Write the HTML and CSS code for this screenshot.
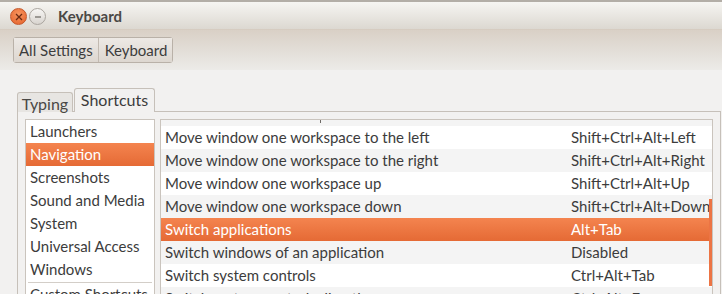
FILE: index.html
```html
<!DOCTYPE html>
<html lang="en">
<head>
    <meta charset="UTF-8">
    <title>Keyboard</title>
    <link rel="stylesheet" href="styles.css">
</head>
<body>

    <!-- Window title bar -->
    <div class="titlebar">
        <span class="wbtn close">
            <svg width="8" height="8" viewBox="0 0 8 8"><path d="M1 1L7 7M7 1L1 7" stroke="#6b2a12" stroke-width="1.3"/></svg>
        </span>
        <span class="wbtn min">
            <svg width="8" height="8" viewBox="0 0 8 8"><path d="M1 4H7" stroke="#6a6661" stroke-width="1.2"/></svg>
        </span>
        <span class="title">Keyboard</span>
    </div>

    <!-- Breadcrumb toolbar -->
    <div class="toolbar">
        <div class="crumbs">
            <button type="button">All Settings</button>
            <button type="button">Keyboard</button>
        </div>
    </div>

    <!-- Notebook tabs -->
    <div class="tabs">
        <span class="tab">Typing</span>
        <span class="tab active">Shortcuts</span>
    </div>

    <div class="panel">
        <ul class="cats">
            <li>Launchers</li>
            <li class="selected">Navigation</li>
            <li>Screenshots</li>
            <li>Sound and Media</li>
            <li>System</li>
            <li>Universal Access</li>
            <li>Windows</li>
            <li class="sep">Custom Shortcuts</li>
        </ul>

        <div class="keys">
            <div class="row partial"><span class="mark"></span></div>
            <div class="row"><span>Move window one workspace to the left</span><span>Shift+Ctrl+Alt+Left</span></div>
            <div class="row odd"><span>Move window one workspace to the right</span><span>Shift+Ctrl+Alt+Right</span></div>
            <div class="row"><span>Move window one workspace up</span><span>Shift+Ctrl+Alt+Up</span></div>
            <div class="row odd"><span>Move window one workspace down</span><span>Shift+Ctrl+Alt+Down</span></div>
            <div class="row selected"><span>Switch applications</span><span>Alt+Tab</span></div>
            <div class="row odd"><span>Switch windows of an application</span><span>Disabled</span></div>
            <div class="row"><span>Switch system controls</span><span>Ctrl+Alt+Tab</span></div>
            <div class="row odd"><span>Switch system controls directly</span><span>Ctrl+Alt+Esc</span></div>
            <div class="thumb"></div>
        </div>
    </div>

</body>
</html>
```

FILE: styles.css
```css
/* General page styling */
body {
    margin: 0;
    background-color: #f2f1f0;
    color: #3c3c3c;
    font-family: Lato, "Open Sans", sans-serif;
    font-size: 15px;
    overflow: hidden;
    height: 294px;
}

/* Title bar */
.titlebar {
    height: 27px;
    border-top: 2px solid #b3aea7;
    border-bottom: 1px solid #d6ccc1;
    background: linear-gradient(#f6f5f2, #dcd8d1);
    display: flex;
    align-items: center;
    padding-left: 10px;
}

.wbtn {
    width: 15px;
    height: 15px;
    border-radius: 50%;
    display: flex;
    align-items: center;
    justify-content: center;
    margin-top: 2px;
}

.close {
    background: radial-gradient(circle at 50% 35%, #f7955f, #e4612a);
    border: 1px solid #c4582c;
}

.min {
    margin-left: 2px;
    background: linear-gradient(#f7f6f4, #d8d4cf);
    border: 1px solid #aaa59f;
}

.title {
    margin-left: 12px;
    font-weight: bold;
    font-size: 15px;
    color: #4a4845;
    margin-top: 1px;
}

/* Toolbar */
.toolbar {
    height: 33px;
    padding: 7px 0 0 13px;
    background: linear-gradient(#d9d0c6, #ecebe8);
}

.crumbs {
    display: inline-flex;
    border: 1px solid #b9b1a8;
    border-radius: 3px;
    height: 24px;
}

.crumbs button {
    font-family: inherit;
    font-size: 15px;
    color: #3c3c3c;
    background: linear-gradient(#ede9e5, #ddd7d0);
    border: none;
    padding: 0 5px;
    margin: 0;
    height: 24px;
    white-space: nowrap;
}

.crumbs button + button {
    border-left: 1px solid #c2bab1;
    padding: 0 5px 0 6px;
}

/* Tabs */
.tabs {
    display: flex;
    align-items: flex-end;
    margin: 19px 0 0 17px;
    gap: 1px;
    height: 23px;
    position: relative;
    z-index: 1;
}

.tab {
    height: 19px;
    width: 54px;
    border: 1px solid #c6c0b9;
    border-bottom: none;
    border-radius: 3px 3px 0 0;
    background: #e7e5e2;
    text-align: center;
    font-size: 16px;
    line-height: 21px;
    color: #4a4845;
}

.tab.active {
    height: 23px;
    width: 79px;
    background: #f2f1f0;
    line-height: 22px;
    color: #3c3c3c;
}

/* Notebook page */
.panel {
    margin: -1px 1px 0 17px;
    border: 1px solid #c6c0b9;
    padding: 7px 7px 0 7px;
    display: flex;
    gap: 5px;
    height: 200px;
}

.cats {
    list-style: none;
    margin: 0;
    padding: 0;
    width: 128px;
    flex: none;
    background: white;
    border: 1px solid #cac4bd;
    overflow: hidden;
}

.cats li {
    height: 23px;
    line-height: 23px;
    padding-left: 4px;
    white-space: nowrap;
}

.cats li.selected,
.keys .row.selected {
    background: linear-gradient(#f4844f, #e56a35);
    color: white;
}

.cats li.sep {
    margin: 1px 2px 0 2px;
    padding-left: 2px;
    border-top: 1px solid #d3cec8;
}

.keys {
    flex: 1;
    background: white;
    border: 1px solid #cac4bd;
    position: relative;
}

.row {
    display: grid;
    grid-template-columns: 406px 1fr;
    height: 23px;
    line-height: 23px;
}

.row span {
    padding-left: 4px;
    white-space: nowrap;
}

.row.odd,
.row.partial {
    background: #f4f4f4;
}

.row.partial {
    height: 6px;
    display: block;
    position: relative;
}

.mark {
    position: absolute;
    left: 159px;
    top: 0;
    width: 1px;
    height: 3px;
    background: #6e6a66;
    padding: 0 !important;
}

/* Overlay scrollbar */
.thumb {
    position: absolute;
    right: 0;
    top: 79px;
    width: 3px;
    height: 87px;
    background: #ec7444;
}
```
